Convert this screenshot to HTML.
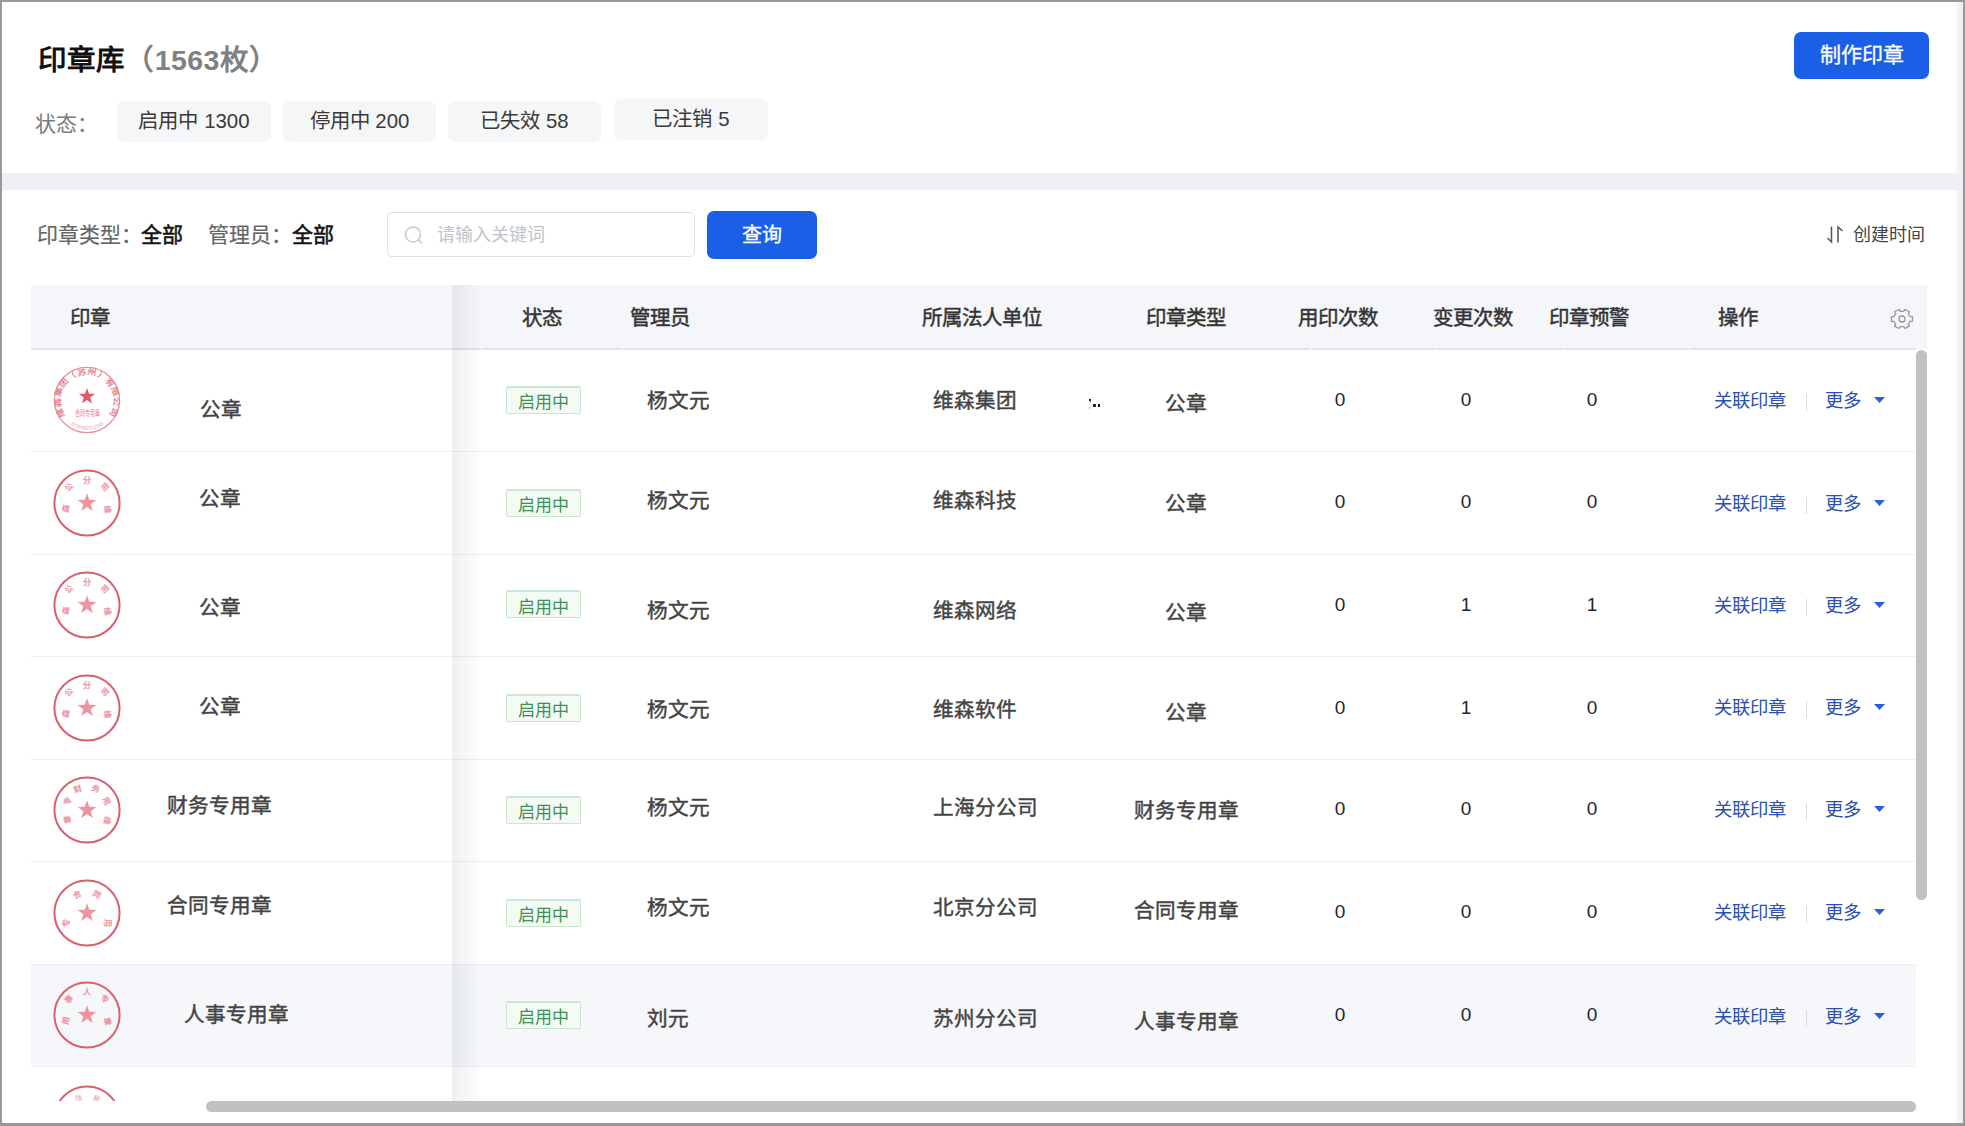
<!DOCTYPE html>
<html lang="zh-CN"><head><meta charset="utf-8"><title>印章库</title>
<style>
html,body{margin:0;padding:0;width:1965px;height:1126px;overflow:hidden;background:#9c9c9c;font-family:'Liberation Sans',sans-serif;}
.r{position:absolute;}
.t{position:absolute;white-space:nowrap;margin-top:-1px;}
</style></head><body>
<div class="r" style="left:0px;top:0px;width:1965px;height:1126px;background:#989898"></div>
<div class="r" style="left:2px;top:2px;width:1961px;height:1121px;background:#eff0f4"></div>
<div class="r" style="left:2px;top:2px;width:1957px;height:171px;background:#fff"></div>
<div class="t" style="left:38.3px;top:46.8px;font-size:28.5px;line-height:28.5px;color:#111;font-weight:700;">印章库<span style="color:#808080;letter-spacing:0.4px">（1563枚）</span></div>
<div class="t" style="left:35.0px;top:114.0px;font-size:21px;line-height:21px;color:#7a7a7a;font-weight:400;">状态：</div>
<div class="r" style="left:117px;top:101px;width:154px;height:41px;background:#f5f6f8;border-radius:7px"></div>
<div class="t" style="left:117px;top:111.5px;width:154px;text-align:center;font-size:20.4px;line-height:20.4px;color:#3a3a3a">启用中 1300</div>
<div class="r" style="left:283px;top:101px;width:153px;height:41px;background:#f5f6f8;border-radius:7px"></div>
<div class="t" style="left:283px;top:111.5px;width:153px;text-align:center;font-size:20.4px;line-height:20.4px;color:#3a3a3a">停用中 200</div>
<div class="r" style="left:448px;top:101px;width:153px;height:41px;background:#f5f6f8;border-radius:7px"></div>
<div class="t" style="left:448px;top:111.5px;width:153px;text-align:center;font-size:20.4px;line-height:20.4px;color:#3a3a3a">已失效 58</div>
<div class="r" style="left:614px;top:99px;width:154px;height:41px;background:#f5f6f8;border-radius:7px"></div>
<div class="t" style="left:614px;top:109.5px;width:154px;text-align:center;font-size:20.4px;line-height:20.4px;color:#3a3a3a">已注销 5</div>
<div class="r" style="left:1794px;top:32px;width:135px;height:47px;background:#1a5fe6;border-radius:7px"></div>
<div class="t" style="left:1794px;top:45px;width:135px;text-align:center;font-size:21px;line-height:21px;color:#fff;-webkit-text-stroke:0.3px #fff">制作印章</div>
<div class="r" style="left:2px;top:190px;width:1957px;height:933px;background:#fff"></div>
<div class="t" style="left:37.0px;top:225.0px;font-size:21px;line-height:21px;color:#666;font-weight:400;-webkit-text-stroke:0.2px #666">印章类型：</div>
<div class="t" style="left:141.0px;top:225.0px;font-size:21px;line-height:21px;color:#111;font-weight:400;-webkit-text-stroke:0.55px #111">全部</div>
<div class="t" style="left:208.0px;top:225.0px;font-size:21px;line-height:21px;color:#666;font-weight:400;-webkit-text-stroke:0.2px #666">管理员：</div>
<div class="t" style="left:292.0px;top:225.0px;font-size:21px;line-height:21px;color:#111;font-weight:400;-webkit-text-stroke:0.55px #111">全部</div>
<div class="r" style="left:387px;top:212px;width:308px;height:45px;box-sizing:border-box;border:1px solid #dcdfe6;border-radius:5px;background:#fff"></div>
<svg class="r" style="left:403px;top:224px" width="22" height="22" viewBox="0 0 22 22"><circle cx="10" cy="10.5" r="7.5" fill="none" stroke="#c8cad0" stroke-width="1.6"/><line x1="15.5" y1="16" x2="19" y2="19.5" stroke="#c8cad0" stroke-width="1.6"/></svg>
<div class="t" style="left:437.0px;top:227.0px;font-size:18px;line-height:18px;color:#c0c4cc;font-weight:400;">请输入关键词</div>
<div class="r" style="left:707px;top:211px;width:110px;height:48px;background:#1a5fe6;border-radius:7px"></div>
<div class="t" style="left:707px;top:226px;width:110px;text-align:center;font-size:20px;line-height:20px;color:#fff;-webkit-text-stroke:0.3px #fff">查询</div>
<svg class="r" style="left:1825px;top:225px" width="20" height="19" viewBox="0 0 20 19"><path d="M6.5 1.5V17L2.5 13" fill="none" stroke="#555" stroke-width="1.5"/><path d="M13 17.5V2l4.5 4" fill="none" stroke="#555" stroke-width="1.5"/></svg>
<div class="t" style="left:1853.0px;top:227.0px;font-size:18px;line-height:18px;color:#444;font-weight:400;">创建时间</div>
<div class="r" style="left:31px;top:285px;width:1896px;height:64px;background:#f5f6fa"></div>
<div class="r" style="left:31px;top:348px;width:1885px;height:2px;background:#e1e3e8"></div>
<div class="r" style="left:481px;top:348px;width:2px;height:2px;background:#f3f4f8"></div>
<div class="r" style="left:621px;top:348px;width:2px;height:2px;background:#f3f4f8"></div>
<div class="r" style="left:903px;top:348px;width:2px;height:2px;background:#f3f4f8"></div>
<div class="r" style="left:1127px;top:348px;width:2px;height:2px;background:#f3f4f8"></div>
<div class="r" style="left:1310px;top:348px;width:2px;height:2px;background:#f3f4f8"></div>
<div class="r" style="left:1436px;top:348px;width:2px;height:2px;background:#f3f4f8"></div>
<div class="r" style="left:1562px;top:348px;width:2px;height:2px;background:#f3f4f8"></div>
<div class="r" style="left:1689px;top:348px;width:2px;height:2px;background:#f3f4f8"></div>
<div class="t" style="left:70.0px;top:308.7px;font-size:20.5px;line-height:20.5px;color:#333;font-weight:400;-webkit-text-stroke:0.45px #333">印章</div>
<div class="t" style="left:521.6px;top:308.7px;font-size:20.5px;line-height:20.5px;color:#333;font-weight:400;-webkit-text-stroke:0.45px #333">状态</div>
<div class="t" style="left:629.5px;top:308.7px;font-size:20.5px;line-height:20.5px;color:#333;font-weight:400;-webkit-text-stroke:0.45px #333">管理员</div>
<div class="t" style="left:921.6px;top:309.2px;font-size:20.5px;line-height:20.5px;color:#333;font-weight:400;-webkit-text-stroke:0.45px #333">所属法人单位</div>
<div class="t" style="left:1146.0px;top:309.2px;font-size:20.5px;line-height:20.5px;color:#333;font-weight:400;-webkit-text-stroke:0.45px #333">印章类型</div>
<div class="t" style="left:1298.0px;top:309.2px;font-size:20.5px;line-height:20.5px;color:#333;font-weight:400;-webkit-text-stroke:0.45px #333">用印次数</div>
<div class="t" style="left:1433.0px;top:308.7px;font-size:20.5px;line-height:20.5px;color:#333;font-weight:400;-webkit-text-stroke:0.45px #333">变更次数</div>
<div class="t" style="left:1548.5px;top:308.7px;font-size:20.5px;line-height:20.5px;color:#333;font-weight:400;-webkit-text-stroke:0.45px #333">印章预警</div>
<div class="t" style="left:1717.6px;top:308.7px;font-size:20.5px;line-height:20.5px;color:#333;font-weight:400;-webkit-text-stroke:0.45px #333">操作</div>
<svg class="r" style="left:1889px;top:306.8px" width="26" height="24" viewBox="0 0 26 24"><path d="M20.27 7.80 L20.99 9.40 L23.48 9.39 L23.48 14.61 L20.99 14.60 L20.27 16.20 L19.24 17.62 L20.50 19.77 L15.98 22.38 L14.75 20.22 L13.00 20.40 L11.25 20.22 L10.02 22.38 L5.50 19.77 L6.76 17.62 L5.73 16.20 L5.01 14.60 L2.52 14.61 L2.52 9.39 L5.01 9.40 L5.73 7.80 L6.76 6.38 L5.50 4.23 L10.02 1.62 L11.25 3.78 L13.00 3.60 L14.75 3.78 L15.98 1.62 L20.50 4.23 L19.24 6.38Z" fill="none" stroke="#9a9a9a" stroke-width="1.3" stroke-linejoin="round" transform="scale(1 0.92) translate(0 1)"/><circle cx="13" cy="12" r="3" fill="none" stroke="#9a9a9a" stroke-width="1.3"/></svg>
<div class="r" style="left:31px;top:964px;width:1885px;height:102px;background:#f5f7fa"></div>
<div class="r" style="left:31px;top:451px;width:1885px;height:1px;background:#eceef2"></div>
<div class="r" style="left:31px;top:554px;width:1885px;height:1px;background:#eceef2"></div>
<div class="r" style="left:31px;top:656px;width:1885px;height:1px;background:#eceef2"></div>
<div class="r" style="left:31px;top:759px;width:1885px;height:1px;background:#eceef2"></div>
<div class="r" style="left:31px;top:861px;width:1885px;height:1px;background:#eceef2"></div>
<div class="r" style="left:31px;top:964px;width:1885px;height:1px;background:#eceef2"></div>
<div class="r" style="left:31px;top:1066px;width:1885px;height:1px;background:#eceef2"></div>
<div class="t" style="left:200.4px;top:401.2px;font-size:20.6px;line-height:20.6px;color:#444;font-weight:400;-webkit-text-stroke:0.45px #444">公章</div>
<div class="r" style="left:506px;top:386px;width:75px;height:28px;box-sizing:border-box;border:1px solid #c6e6cd;border-top:2px solid #cce6d2;background:#f3fbf4;border-radius:2px"></div>
<div class="t" style="left:506px;top:395.0px;width:75px;text-align:center;font-size:17px;line-height:17px;color:#3f8f55">启用中</div>
<div class="t" style="left:647.0px;top:391.7px;font-size:20.6px;line-height:20.6px;color:#444;font-weight:400;-webkit-text-stroke:0.45px #444">杨文元</div>
<div class="t" style="left:933.0px;top:391.7px;font-size:20.6px;line-height:20.6px;color:#444;font-weight:400;-webkit-text-stroke:0.45px #444">维森集团</div>
<div class="t" style="left:1165.3px;top:395.1px;font-size:20.6px;line-height:20.6px;color:#444;font-weight:400;-webkit-text-stroke:0.45px #444">公章</div>
<div class="t" style="left:1320px;top:391.0px;width:40px;text-align:center;font-size:19px;line-height:19px;color:#1f2633">0</div>
<div class="t" style="left:1446px;top:391.0px;width:40px;text-align:center;font-size:19px;line-height:19px;color:#1f2633">0</div>
<div class="t" style="left:1572px;top:391.0px;width:40px;text-align:center;font-size:19px;line-height:19px;color:#1f2633">0</div>
<div class="t" style="left:1714.3px;top:393.4px;font-size:18.4px;line-height:18.4px;color:#2a50b0;font-weight:400;">关联印章</div>
<div class="r" style="left:1806px;top:394px;width:1px;height:17px;background:#d9dbe0"></div>
<div class="t" style="left:1825.0px;top:393.4px;font-size:18.4px;line-height:18.4px;color:#2a50b0;font-weight:400;">更多</div>
<svg class="r" style="left:1873px;top:396.4px" width="13" height="8" viewBox="0 0 13 8"><path d="M1 1h11l-5.5 6z" fill="#2a5ee0"/></svg>
<div class="t" style="left:198.8px;top:489.8px;font-size:20.6px;line-height:20.6px;color:#444;font-weight:400;-webkit-text-stroke:0.45px #444">公章</div>
<div class="r" style="left:506px;top:489px;width:75px;height:28px;box-sizing:border-box;border:1px solid #c6e6cd;border-top:2px solid #cce6d2;background:#f3fbf4;border-radius:2px"></div>
<div class="t" style="left:506px;top:498.0px;width:75px;text-align:center;font-size:17px;line-height:17px;color:#3f8f55">启用中</div>
<div class="t" style="left:647.0px;top:491.5px;font-size:20.6px;line-height:20.6px;color:#444;font-weight:400;-webkit-text-stroke:0.45px #444">杨文元</div>
<div class="t" style="left:933.0px;top:491.5px;font-size:20.6px;line-height:20.6px;color:#444;font-weight:400;-webkit-text-stroke:0.45px #444">维森科技</div>
<div class="t" style="left:1165.3px;top:495.1px;font-size:20.6px;line-height:20.6px;color:#444;font-weight:400;-webkit-text-stroke:0.45px #444">公章</div>
<div class="t" style="left:1320px;top:493.3px;width:40px;text-align:center;font-size:19px;line-height:19px;color:#1f2633">0</div>
<div class="t" style="left:1446px;top:493.3px;width:40px;text-align:center;font-size:19px;line-height:19px;color:#1f2633">0</div>
<div class="t" style="left:1572px;top:493.3px;width:40px;text-align:center;font-size:19px;line-height:19px;color:#1f2633">0</div>
<div class="t" style="left:1714.3px;top:495.6px;font-size:18.4px;line-height:18.4px;color:#2a50b0;font-weight:400;">关联印章</div>
<div class="r" style="left:1806px;top:497px;width:1px;height:17px;background:#d9dbe0"></div>
<div class="t" style="left:1825.0px;top:495.6px;font-size:18.4px;line-height:18.4px;color:#2a50b0;font-weight:400;">更多</div>
<svg class="r" style="left:1873px;top:498.6px" width="13" height="8" viewBox="0 0 13 8"><path d="M1 1h11l-5.5 6z" fill="#2a5ee0"/></svg>
<div class="t" style="left:198.8px;top:598.5px;font-size:20.6px;line-height:20.6px;color:#444;font-weight:400;-webkit-text-stroke:0.45px #444">公章</div>
<div class="r" style="left:506px;top:590px;width:75px;height:28px;box-sizing:border-box;border:1px solid #c6e6cd;border-top:2px solid #cce6d2;background:#f3fbf4;border-radius:2px"></div>
<div class="t" style="left:506px;top:599.5px;width:75px;text-align:center;font-size:17px;line-height:17px;color:#3f8f55">启用中</div>
<div class="t" style="left:647.0px;top:601.5px;font-size:20.6px;line-height:20.6px;color:#444;font-weight:400;-webkit-text-stroke:0.45px #444">杨文元</div>
<div class="t" style="left:933.0px;top:601.5px;font-size:20.6px;line-height:20.6px;color:#444;font-weight:400;-webkit-text-stroke:0.45px #444">维森网络</div>
<div class="t" style="left:1165.3px;top:604.4px;font-size:20.6px;line-height:20.6px;color:#444;font-weight:400;-webkit-text-stroke:0.45px #444">公章</div>
<div class="t" style="left:1320px;top:595.6px;width:40px;text-align:center;font-size:19px;line-height:19px;color:#1f2633">0</div>
<div class="t" style="left:1446px;top:595.6px;width:40px;text-align:center;font-size:19px;line-height:19px;color:#1f2633">1</div>
<div class="t" style="left:1572px;top:595.6px;width:40px;text-align:center;font-size:19px;line-height:19px;color:#1f2633">1</div>
<div class="t" style="left:1714.3px;top:598.0px;font-size:18.4px;line-height:18.4px;color:#2a50b0;font-weight:400;">关联印章</div>
<div class="r" style="left:1806px;top:599px;width:1px;height:17px;background:#d9dbe0"></div>
<div class="t" style="left:1825.0px;top:598.0px;font-size:18.4px;line-height:18.4px;color:#2a50b0;font-weight:400;">更多</div>
<svg class="r" style="left:1873px;top:601.0px" width="13" height="8" viewBox="0 0 13 8"><path d="M1 1h11l-5.5 6z" fill="#2a5ee0"/></svg>
<div class="t" style="left:198.8px;top:697.7px;font-size:20.6px;line-height:20.6px;color:#444;font-weight:400;-webkit-text-stroke:0.45px #444">公章</div>
<div class="r" style="left:506px;top:694px;width:75px;height:28px;box-sizing:border-box;border:1px solid #c6e6cd;border-top:2px solid #cce6d2;background:#f3fbf4;border-radius:2px"></div>
<div class="t" style="left:506px;top:702.7px;width:75px;text-align:center;font-size:17px;line-height:17px;color:#3f8f55">启用中</div>
<div class="t" style="left:647.0px;top:700.7px;font-size:20.6px;line-height:20.6px;color:#444;font-weight:400;-webkit-text-stroke:0.45px #444">杨文元</div>
<div class="t" style="left:933.0px;top:700.7px;font-size:20.6px;line-height:20.6px;color:#444;font-weight:400;-webkit-text-stroke:0.45px #444">维森软件</div>
<div class="t" style="left:1165.3px;top:703.5px;font-size:20.6px;line-height:20.6px;color:#444;font-weight:400;-webkit-text-stroke:0.45px #444">公章</div>
<div class="t" style="left:1320px;top:698.5px;width:40px;text-align:center;font-size:19px;line-height:19px;color:#1f2633">0</div>
<div class="t" style="left:1446px;top:698.5px;width:40px;text-align:center;font-size:19px;line-height:19px;color:#1f2633">1</div>
<div class="t" style="left:1572px;top:698.5px;width:40px;text-align:center;font-size:19px;line-height:19px;color:#1f2633">0</div>
<div class="t" style="left:1714.3px;top:700.2px;font-size:18.4px;line-height:18.4px;color:#2a50b0;font-weight:400;">关联印章</div>
<div class="r" style="left:1806px;top:701px;width:1px;height:17px;background:#d9dbe0"></div>
<div class="t" style="left:1825.0px;top:700.2px;font-size:18.4px;line-height:18.4px;color:#2a50b0;font-weight:400;">更多</div>
<svg class="r" style="left:1873px;top:703.2px" width="13" height="8" viewBox="0 0 13 8"><path d="M1 1h11l-5.5 6z" fill="#2a5ee0"/></svg>
<div class="t" style="left:167.0px;top:797.4px;font-size:20.6px;line-height:20.6px;color:#444;font-weight:400;-webkit-text-stroke:0.45px #444">财务专用章</div>
<div class="r" style="left:506px;top:796px;width:75px;height:28px;box-sizing:border-box;border:1px solid #c6e6cd;border-top:2px solid #cce6d2;background:#f3fbf4;border-radius:2px"></div>
<div class="t" style="left:506px;top:805.0px;width:75px;text-align:center;font-size:17px;line-height:17px;color:#3f8f55">启用中</div>
<div class="t" style="left:647.0px;top:799.2px;font-size:20.6px;line-height:20.6px;color:#444;font-weight:400;-webkit-text-stroke:0.45px #444">杨文元</div>
<div class="t" style="left:933.0px;top:799.2px;font-size:20.6px;line-height:20.6px;color:#444;font-weight:400;-webkit-text-stroke:0.45px #444">上海分公司</div>
<div class="t" style="left:1133.5px;top:802.4px;font-size:20.6px;line-height:20.6px;color:#444;font-weight:400;-webkit-text-stroke:0.45px #444">财务专用章</div>
<div class="t" style="left:1320px;top:800.3px;width:40px;text-align:center;font-size:19px;line-height:19px;color:#1f2633">0</div>
<div class="t" style="left:1446px;top:800.3px;width:40px;text-align:center;font-size:19px;line-height:19px;color:#1f2633">0</div>
<div class="t" style="left:1572px;top:800.3px;width:40px;text-align:center;font-size:19px;line-height:19px;color:#1f2633">0</div>
<div class="t" style="left:1714.3px;top:802.0px;font-size:18.4px;line-height:18.4px;color:#2a50b0;font-weight:400;">关联印章</div>
<div class="r" style="left:1806px;top:803px;width:1px;height:17px;background:#d9dbe0"></div>
<div class="t" style="left:1825.0px;top:802.0px;font-size:18.4px;line-height:18.4px;color:#2a50b0;font-weight:400;">更多</div>
<svg class="r" style="left:1873px;top:805.0px" width="13" height="8" viewBox="0 0 13 8"><path d="M1 1h11l-5.5 6z" fill="#2a5ee0"/></svg>
<div class="t" style="left:167.0px;top:896.7px;font-size:20.6px;line-height:20.6px;color:#444;font-weight:400;-webkit-text-stroke:0.45px #444">合同专用章</div>
<div class="r" style="left:506px;top:899px;width:75px;height:28px;box-sizing:border-box;border:1px solid #c6e6cd;border-top:2px solid #cce6d2;background:#f3fbf4;border-radius:2px"></div>
<div class="t" style="left:506px;top:907.8px;width:75px;text-align:center;font-size:17px;line-height:17px;color:#3f8f55">启用中</div>
<div class="t" style="left:647.0px;top:898.6px;font-size:20.6px;line-height:20.6px;color:#444;font-weight:400;-webkit-text-stroke:0.45px #444">杨文元</div>
<div class="t" style="left:933.0px;top:898.6px;font-size:20.6px;line-height:20.6px;color:#444;font-weight:400;-webkit-text-stroke:0.45px #444">北京分公司</div>
<div class="t" style="left:1133.5px;top:901.9px;font-size:20.6px;line-height:20.6px;color:#444;font-weight:400;-webkit-text-stroke:0.45px #444">合同专用章</div>
<div class="t" style="left:1320px;top:903.2px;width:40px;text-align:center;font-size:19px;line-height:19px;color:#1f2633">0</div>
<div class="t" style="left:1446px;top:903.2px;width:40px;text-align:center;font-size:19px;line-height:19px;color:#1f2633">0</div>
<div class="t" style="left:1572px;top:903.2px;width:40px;text-align:center;font-size:19px;line-height:19px;color:#1f2633">0</div>
<div class="t" style="left:1714.3px;top:905.0px;font-size:18.4px;line-height:18.4px;color:#2a50b0;font-weight:400;">关联印章</div>
<div class="r" style="left:1806px;top:906px;width:1px;height:17px;background:#d9dbe0"></div>
<div class="t" style="left:1825.0px;top:905.0px;font-size:18.4px;line-height:18.4px;color:#2a50b0;font-weight:400;">更多</div>
<svg class="r" style="left:1873px;top:908.0px" width="13" height="8" viewBox="0 0 13 8"><path d="M1 1h11l-5.5 6z" fill="#2a5ee0"/></svg>
<div class="t" style="left:183.8px;top:1005.7px;font-size:20.6px;line-height:20.6px;color:#444;font-weight:400;-webkit-text-stroke:0.45px #444">人事专用章</div>
<div class="r" style="left:506px;top:1001px;width:75px;height:28px;box-sizing:border-box;border:1px solid #c6e6cd;border-top:2px solid #cce6d2;background:#f3fbf4;border-radius:2px"></div>
<div class="t" style="left:506px;top:1010.0px;width:75px;text-align:center;font-size:17px;line-height:17px;color:#3f8f55">启用中</div>
<div class="t" style="left:647.0px;top:1009.6px;font-size:20.6px;line-height:20.6px;color:#444;font-weight:400;-webkit-text-stroke:0.45px #444">刘元</div>
<div class="t" style="left:933.0px;top:1009.6px;font-size:20.6px;line-height:20.6px;color:#444;font-weight:400;-webkit-text-stroke:0.45px #444">苏州分公司</div>
<div class="t" style="left:1133.5px;top:1012.7px;font-size:20.6px;line-height:20.6px;color:#444;font-weight:400;-webkit-text-stroke:0.45px #444">人事专用章</div>
<div class="t" style="left:1320px;top:1005.5px;width:40px;text-align:center;font-size:19px;line-height:19px;color:#1f2633">0</div>
<div class="t" style="left:1446px;top:1005.5px;width:40px;text-align:center;font-size:19px;line-height:19px;color:#1f2633">0</div>
<div class="t" style="left:1572px;top:1005.5px;width:40px;text-align:center;font-size:19px;line-height:19px;color:#1f2633">0</div>
<div class="t" style="left:1714.3px;top:1008.5px;font-size:18.4px;line-height:18.4px;color:#2a50b0;font-weight:400;">关联印章</div>
<div class="r" style="left:1806px;top:1010px;width:1px;height:17px;background:#d9dbe0"></div>
<div class="t" style="left:1825.0px;top:1008.5px;font-size:18.4px;line-height:18.4px;color:#2a50b0;font-weight:400;">更多</div>
<svg class="r" style="left:1873px;top:1011.5px" width="13" height="8" viewBox="0 0 13 8"><path d="M1 1h11l-5.5 6z" fill="#2a5ee0"/></svg>
<svg class="r" style="left:51px;top:364px" width="72" height="72" viewBox="0 0 72 72"><defs><path id="arc1" d="M15 53 A26.5 26.5 0 1 1 57 53"/><path id="arc2" d="M17 58 A27 27 0 0 0 55 58"/></defs><circle cx="36" cy="36" r="32.6" fill="none" stroke="#e8909a" stroke-width="1.3"/><text font-size="7.6" fill="#e2808d" stroke="#e2808d" stroke-width="0.25"><textPath href="#arc1" startOffset="50%" text-anchor="middle" textLength="114" lengthAdjust="spacingAndGlyphs">维森集团（苏州）有限公司</textPath></text><path d="M36.00,24.00 L38.00,29.75 L44.08,29.87 L39.23,33.55 L41.00,39.38 L36.00,35.90 L31.00,39.38 L32.77,33.55 L27.92,29.87 L34.00,29.75Z" fill="#e25868"/><text x="36" y="52" font-size="8" fill="#e07c8a" text-anchor="middle" textLength="25" lengthAdjust="spacingAndGlyphs">合同专用章</text><text font-size="5" fill="#eba2ac"><textPath href="#arc2" startOffset="50%" text-anchor="middle">3205060012345</textPath></text></svg>
<svg class="r" style="left:51px;top:466.5px" width="72" height="72" viewBox="0 0 72 72"><circle cx="36" cy="36" r="32.6" fill="none" stroke="#d8606e" stroke-width="2"/><path d="M36.00,26.20 L38.30,32.83 L45.32,32.97 L39.73,37.21 L41.76,43.93 L36.00,39.92 L30.24,43.93 L32.27,37.21 L26.68,32.97 L33.70,32.83Z" fill="#ec94a0"/><text x="36" y="16" font-size="8" fill="#e8909c" stroke="#e8909c" stroke-width="0.3" text-anchor="middle" transform="rotate(0 36 13)">分</text><text x="18" y="23" font-size="8" fill="#e8909c" stroke="#e8909c" stroke-width="0.3" text-anchor="middle" transform="rotate(-45 18 20)">公</text><text x="54" y="23" font-size="8" fill="#e8909c" stroke="#e8909c" stroke-width="0.3" text-anchor="middle" transform="rotate(45 54 20)">司</text><text x="15" y="45" font-size="8" fill="#e8909c" stroke="#e8909c" stroke-width="0.3" text-anchor="middle" transform="rotate(-80 15 42)">森</text><text x="57" y="45" font-size="8" fill="#e8909c" stroke="#e8909c" stroke-width="0.3" text-anchor="middle" transform="rotate(80 57 42)">维</text></svg>
<svg class="r" style="left:51px;top:569px" width="72" height="72" viewBox="0 0 72 72"><circle cx="36" cy="36" r="32.6" fill="none" stroke="#d8606e" stroke-width="2"/><path d="M36.00,26.20 L38.30,32.83 L45.32,32.97 L39.73,37.21 L41.76,43.93 L36.00,39.92 L30.24,43.93 L32.27,37.21 L26.68,32.97 L33.70,32.83Z" fill="#ec94a0"/><text x="36" y="16" font-size="8" fill="#e8909c" stroke="#e8909c" stroke-width="0.3" text-anchor="middle" transform="rotate(0 36 13)">分</text><text x="18" y="23" font-size="8" fill="#e8909c" stroke="#e8909c" stroke-width="0.3" text-anchor="middle" transform="rotate(-45 18 20)">公</text><text x="54" y="23" font-size="8" fill="#e8909c" stroke="#e8909c" stroke-width="0.3" text-anchor="middle" transform="rotate(45 54 20)">司</text><text x="15" y="45" font-size="8" fill="#e8909c" stroke="#e8909c" stroke-width="0.3" text-anchor="middle" transform="rotate(-80 15 42)">森</text><text x="57" y="45" font-size="8" fill="#e8909c" stroke="#e8909c" stroke-width="0.3" text-anchor="middle" transform="rotate(80 57 42)">维</text></svg>
<svg class="r" style="left:51px;top:671.5px" width="72" height="72" viewBox="0 0 72 72"><circle cx="36" cy="36" r="32.6" fill="none" stroke="#d8606e" stroke-width="2"/><path d="M36.00,26.20 L38.30,32.83 L45.32,32.97 L39.73,37.21 L41.76,43.93 L36.00,39.92 L30.24,43.93 L32.27,37.21 L26.68,32.97 L33.70,32.83Z" fill="#ec94a0"/><text x="36" y="16" font-size="8" fill="#e8909c" stroke="#e8909c" stroke-width="0.3" text-anchor="middle" transform="rotate(0 36 13)">分</text><text x="18" y="23" font-size="8" fill="#e8909c" stroke="#e8909c" stroke-width="0.3" text-anchor="middle" transform="rotate(-45 18 20)">公</text><text x="54" y="23" font-size="8" fill="#e8909c" stroke="#e8909c" stroke-width="0.3" text-anchor="middle" transform="rotate(45 54 20)">司</text><text x="15" y="45" font-size="8" fill="#e8909c" stroke="#e8909c" stroke-width="0.3" text-anchor="middle" transform="rotate(-80 15 42)">森</text><text x="57" y="45" font-size="8" fill="#e8909c" stroke="#e8909c" stroke-width="0.3" text-anchor="middle" transform="rotate(80 57 42)">维</text></svg>
<svg class="r" style="left:51px;top:774px" width="72" height="72" viewBox="0 0 72 72"><circle cx="36" cy="36" r="32.6" fill="none" stroke="#d8606e" stroke-width="2"/><path d="M36.00,26.20 L38.30,32.83 L45.32,32.97 L39.73,37.21 L41.76,43.93 L36.00,39.92 L30.24,43.93 L32.27,37.21 L26.68,32.97 L33.70,32.83Z" fill="#ec94a0"/><text x="27" y="18" font-size="8" fill="#e8909c" stroke="#e8909c" stroke-width="0.3" text-anchor="middle" transform="rotate(-20 27 15)">财</text><text x="45" y="18" font-size="8" fill="#e8909c" stroke="#e8909c" stroke-width="0.3" text-anchor="middle" transform="rotate(20 45 15)">务</text><text x="16" y="30" font-size="8" fill="#e8909c" stroke="#e8909c" stroke-width="0.3" text-anchor="middle" transform="rotate(-60 16 27)">专</text><text x="56" y="30" font-size="8" fill="#e8909c" stroke="#e8909c" stroke-width="0.3" text-anchor="middle" transform="rotate(60 56 27)">用</text><text x="16" y="49" font-size="8" fill="#e8909c" stroke="#e8909c" stroke-width="0.3" text-anchor="middle" transform="rotate(-100 16 46)">章</text><text x="56" y="49" font-size="8" fill="#e8909c" stroke="#e8909c" stroke-width="0.3" text-anchor="middle" transform="rotate(100 56 46)">维</text></svg>
<svg class="r" style="left:51px;top:876.5px" width="72" height="72" viewBox="0 0 72 72"><circle cx="36" cy="36" r="32.6" fill="none" stroke="#d8606e" stroke-width="2"/><path d="M36.00,26.20 L38.30,32.83 L45.32,32.97 L39.73,37.21 L41.76,43.93 L36.00,39.92 L30.24,43.93 L32.27,37.21 L26.68,32.97 L33.70,32.83Z" fill="#ec94a0"/><text x="26" y="20" font-size="8" fill="#e8909c" stroke="#e8909c" stroke-width="0.3" text-anchor="middle" transform="rotate(-30 26 17)">合</text><text x="46" y="20" font-size="8" fill="#e8909c" stroke="#e8909c" stroke-width="0.3" text-anchor="middle" transform="rotate(30 46 17)">同</text><text x="15" y="49" font-size="8" fill="#e8909c" stroke="#e8909c" stroke-width="0.3" text-anchor="middle" transform="rotate(-90 15 46)">专</text><text x="57" y="49" font-size="8" fill="#e8909c" stroke="#e8909c" stroke-width="0.3" text-anchor="middle" transform="rotate(90 57 46)">用</text></svg>
<svg class="r" style="left:51px;top:979px" width="72" height="72" viewBox="0 0 72 72"><circle cx="36" cy="36" r="32.6" fill="none" stroke="#d8606e" stroke-width="2"/><path d="M36.00,26.20 L38.30,32.83 L45.32,32.97 L39.73,37.21 L41.76,43.93 L36.00,39.92 L30.24,43.93 L32.27,37.21 L26.68,32.97 L33.70,32.83Z" fill="#ec94a0"/><text x="36" y="16" font-size="8" fill="#e8909c" stroke="#e8909c" stroke-width="0.3" text-anchor="middle" transform="rotate(0 36 13)">人</text><text x="18" y="23" font-size="8" fill="#e8909c" stroke="#e8909c" stroke-width="0.3" text-anchor="middle" transform="rotate(-45 18 20)">事</text><text x="54" y="23" font-size="8" fill="#e8909c" stroke="#e8909c" stroke-width="0.3" text-anchor="middle" transform="rotate(45 54 20)">专</text><text x="15" y="45" font-size="8" fill="#e8909c" stroke="#e8909c" stroke-width="0.3" text-anchor="middle" transform="rotate(-80 15 42)">用</text><text x="57" y="45" font-size="8" fill="#e8909c" stroke="#e8909c" stroke-width="0.3" text-anchor="middle" transform="rotate(80 57 42)">章</text></svg>
<div class="r" style="left:31px;top:1067px;width:120px;height:34px;overflow:hidden"><svg style="position:absolute;left:20px;top:16px" width="72" height="72" viewBox="0 0 72 72"><circle cx="36" cy="36" r="32.6" fill="none" stroke="#d8606e" stroke-width="2"/><text x="27" y="18" font-size="7.5" fill="#eb9aa5" text-anchor="middle" transform="rotate(-20 27 15)">张</text><text x="45" y="18" font-size="7.5" fill="#eb9aa5" text-anchor="middle" transform="rotate(20 45 15)">易</text></svg></div>
<div class="r" style="left:452px;top:285px;width:30px;height:816px;background:linear-gradient(to right,rgba(30,40,70,0.075),rgba(30,40,70,0))"></div>
<div class="r" style="left:1089px;top:399px;width:2px;height:2px;background:#1a2030"></div>
<div class="r" style="left:1090px;top:400px;width:1px;height:2px;background:#404858"></div>
<div class="r" style="left:1089px;top:407px;width:1px;height:2px;background:#b0b0b0"></div>
<div class="r" style="left:1093px;top:404px;width:3px;height:3px;background:#202538"></div>
<div class="r" style="left:1098px;top:404px;width:2px;height:3px;background:#0a0f20"></div>
<div class="r" style="left:1953px;top:2px;width:10px;height:1121px;background:linear-gradient(to right,rgba(255,255,255,0),#eef0f4)"></div>
<div class="r" style="left:1916px;top:350px;width:11px;height:550px;background:#c1c1c1;border-radius:5.5px"></div>
<div class="r" style="left:206px;top:1101px;width:1710px;height:11px;background:#c1c1c1;border-radius:5.5px"></div>
</body></html>
